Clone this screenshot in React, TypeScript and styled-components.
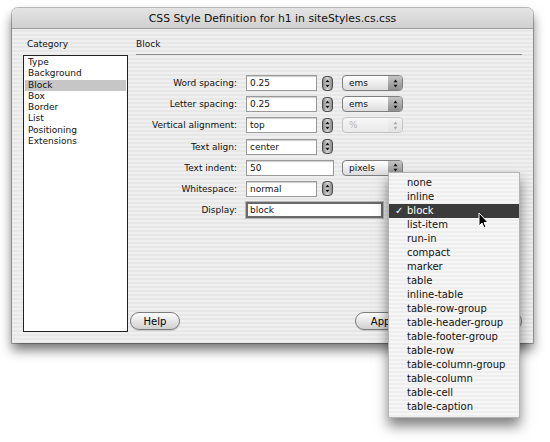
import styled, { createGlobalStyle } from 'styled-components';

const GlobalStyle = createGlobalStyle`
    html, body {
        margin: 0;
        background: #ffffff;
    }
    body {
        font-family: "DejaVu Sans", "Liberation Sans", sans-serif;
        font-size: 9px;
        color: #111;
    }
`;

const rows = [
    { label: 'Word spacing:', value: '0.25', kind: 'combo', unit: 'ems' },
    { label: 'Letter spacing:', value: '0.25', kind: 'combo', unit: 'ems' },
    { label: 'Vertical alignment:', value: 'top', kind: 'combo', unit: '%', disabled: true },
    { label: 'Text align:', value: 'center', kind: 'combo' },
    { label: 'Text indent:', value: '50', kind: 'wide', unit: 'pixels' },
    { label: 'Whitespace:', value: 'normal', kind: 'combo' },
    { label: 'Display:', value: 'block', kind: 'focus' },
];

const categories = ['Type', 'Background', 'Block', 'Box', 'Border', 'List', 'Positioning', 'Extensions'];

const displayOptions = [
    'none', 'inline', 'block', 'list-item', 'run-in', 'compact', 'marker', 'table',
    'inline-table', 'table-row-group', 'table-header-group', 'table-footer-group',
    'table-row', 'table-column-group', 'table-column', 'table-cell', 'table-caption',
];

const Arrows = ({ color = '#111' }: { color?: string }) => (
    <svg width="5" height="9" viewBox="0 0 5 9">
        <path d="M2.5 0.5 L4.5 3.3 L0.5 3.3 Z" fill={color} />
        <path d="M2.5 8.5 L4.5 5.7 L0.5 5.7 Z" fill={color} />
    </svg>
);

const Cursor = () => (
    <svg width="11" height="17" viewBox="0 0 11 17">
        <path d="M1 1 L1 14 L4 11 L6 16 L8 15 L6 10.5 L10 10.5 Z" fill="#000" stroke="#fff" strokeWidth="1" />
    </svg>
);

const App = () => {
    return (
        <>
            <GlobalStyle />
            <Page>
                <Window>
                    <TitleBar>CSS Style Definition for h1 in siteStyles.cs.css</TitleBar>
                    <Body>
                        <Sidebar>
                            <SectionLabel>Category</SectionLabel>
                            <CategoryList>
                                {categories.map((c) => (
                                    <CategoryItem key={c} $active={c === 'Block'}>
                                        {c}
                                    </CategoryItem>
                                ))}
                            </CategoryList>
                        </Sidebar>
                        <Main>
                            <PanelHeader>Block</PanelHeader>
                            <Form>
                                {rows.map((r) => (
                                    <Row key={r.label}>
                                        <Label>{r.label}</Label>
                                        <Controls>
                                            <TextInput $width={r.kind === 'wide' ? 88 : r.kind === 'focus' ? 137 : 71} $focus={r.kind === 'focus'}>
                                                {r.value}
                                            </TextInput>
                                            {r.kind === 'combo' && (
                                                <Stepper>
                                                    <Arrows />
                                                </Stepper>
                                            )}
                                            {r.unit && (
                                                <Popup $disabled={r.disabled} $gap={r.kind === 'wide' ? 8 : 9}>
                                                    <PopupText>{r.unit}</PopupText>
                                                    <PopupArrows $disabled={r.disabled}>
                                                        <Arrows color={r.disabled ? '#aaa' : '#111'} />
                                                    </PopupArrows>
                                                </Popup>
                                            )}
                                        </Controls>
                                    </Row>
                                ))}
                            </Form>
                            <Footer>
                                <PillButton $width={50}>Help</PillButton>
                                <Spacer />
                                <PillButton $width={54}>Appl</PillButton>
                                {/* buttons hidden behind the open menu */}
                                <PillButton $width={58} />
                                <PillButton $width={43} />
                            </Footer>
                        </Main>
                    </Body>
                </Window>
                <Menu>
                    {displayOptions.map((o) => (
                        <MenuItem key={o} $selected={o === 'block'}>
                            {o === 'block' && <Check>✓</Check>}
                            {o}
                        </MenuItem>
                    ))}
                </Menu>
                <CursorWrap>
                    <Cursor />
                </CursorWrap>
            </Page>
        </>
    );
};

const Page = styled.div`
    position: relative;
    width: 550px;
    height: 442px;
    padding: 8px 0 0 12px;
    box-sizing: border-box;
    overflow: hidden;
`;

const Window = styled.div`
    width: 521px;
    height: 335px;
    display: flex;
    flex-direction: column;
    border-radius: 6px 6px 0 0;
    background: repeating-linear-gradient(#efefef 0 2px, #e7e7e7 2px 4px);
    box-shadow:
        0 0 0 1px rgba(0, 0, 0, 0.25),
        0 7px 12px rgba(0, 0, 0, 0.55);
`;

const TitleBar = styled.div`
    height: 20px;
    flex: none;
    display: flex;
    align-items: center;
    justify-content: center;
    border-radius: 6px 6px 0 0;
    background: linear-gradient(#e4e4e4, #d0d0d0);
    border-bottom: 1px solid #9c9c9c;
    font-size: 10.8px;
    color: #111;
`;

const Body = styled.div`
    flex: 1;
    display: grid;
    grid-template-columns: 105px 386px;
    column-gap: 8px;
    padding: 0 11px 11px 11px;
    min-height: 0;
`;

const Sidebar = styled.div`
    display: flex;
    flex-direction: column;
`;

const SectionLabel = styled.div`
    height: 26px;
    padding: 9px 0 0 4px;
    box-sizing: border-box;
    line-height: 12px;
`;

const CategoryList = styled.div`
    flex: 1;
    background: #fff;
    border: 1px solid #222;
    padding: 1px 1px;
    display: flex;
    flex-direction: column;
`;

const CategoryItem = styled.div<{ $active?: boolean }>`
    height: 11.3px;
    line-height: 11.3px;
    padding-left: 3px;
    background: ${(p) => (p.$active ? '#c6c6c6' : 'transparent')};
`;

const Main = styled.div`
    display: flex;
    flex-direction: column;
`;

const PanelHeader = styled.div`
    height: 26px;
    padding-top: 9px;
    box-sizing: border-box;
    line-height: 12px;
    border-bottom: 1px solid #8e8e8e;
`;

const Form = styled.div`
    display: flex;
    flex-direction: column;
    gap: 5.2px;
    padding-top: 20px;
`;

const Row = styled.div`
    display: grid;
    grid-template-columns: 101px 1fr;
    column-gap: 9px;
    align-items: center;
    height: 16px;
`;

const Label = styled.div`
    text-align: right;
    white-space: nowrap;
`;

const Controls = styled.div`
    display: flex;
    align-items: center;
`;

const TextInput = styled.div<{ $width: number; $focus?: boolean }>`
    width: ${(p) => p.$width}px;
    height: 16px;
    box-sizing: border-box;
    background: #fff;
    border: ${(p) => (p.$focus ? '2px solid #6a6a6a' : '1px solid #9a9a9a')};
    box-shadow: ${(p) => (p.$focus ? '0 0 0 1px #b5b5b5' : 'inset 0 1px 1px rgba(0,0,0,0.2)')};
    padding-left: ${(p) => (p.$focus ? 2 : 3)}px;
    line-height: ${(p) => (p.$focus ? 12 : 14)}px;
`;

const Stepper = styled.div`
    width: 11px;
    height: 15px;
    margin-left: 5px;
    box-sizing: border-box;
    border: 1px solid #4e4e4e;
    border-radius: 4px;
    background: linear-gradient(90deg, #8a8a8a, #d6d6d6 50%, #8a8a8a);
    display: flex;
    align-items: center;
    justify-content: center;
`;

const Popup = styled.div<{ $disabled?: boolean; $gap: number }>`
    width: 61px;
    height: 16px;
    margin-left: ${(p) => p.$gap}px;
    box-sizing: border-box;
    display: flex;
    border: 1px solid ${(p) => (p.$disabled ? '#c4c4c4' : '#7e7e7e')};
    border-radius: 4px;
    overflow: hidden;
    background: ${(p) => (p.$disabled ? 'linear-gradient(#f7f7f7, #e9e9e9)' : 'linear-gradient(#ffffff, #dcdcdc)')};
    color: ${(p) => (p.$disabled ? '#b4b4b4' : '#111')};
`;

const PopupText = styled.div`
    flex: 1;
    padding-left: 6px;
    line-height: 14px;
`;

const PopupArrows = styled.div<{ $disabled?: boolean }>`
    width: 14px;
    display: flex;
    align-items: center;
    justify-content: center;
    background: ${(p) => (p.$disabled ? 'linear-gradient(#f2f2f2, #e2e2e2)' : 'linear-gradient(#c4c4c4, #8e8e8e)')};
`;

const Footer = styled.div`
    margin-top: auto;
    margin-left: -6px;
    padding-bottom: 2px;
    display: flex;
    gap: 6px;
`;

const Spacer = styled.div`
    flex: 1;
`;

const PillButton = styled.div<{ $width: number }>`
    width: ${(p) => p.$width}px;
    height: 18px;
    box-sizing: border-box;
    border: 1px solid #7c7c7c;
    border-radius: 9px;
    background: linear-gradient(#fdfdfd, #e4e4e4 55%, #cfcfcf);
    box-shadow: 0 1px 1px rgba(0, 0, 0, 0.15);
    display: flex;
    align-items: center;
    justify-content: center;
    font-size: 10px;
    color: #000;
`;

const Menu = styled.div`
    position: absolute;
    left: 388px;
    top: 172px;
    width: 132px;
    padding: 3px 0;
    box-sizing: border-box;
    background: repeating-linear-gradient(#f6f6f6 0 2px, #eeeeee 2px 4px);
    border: 1px solid #b4b4b4;
    box-shadow: 0 8px 12px rgba(0, 0, 0, 0.5);
    font-size: 10px;
`;

const MenuItem = styled.div<{ $selected?: boolean }>`
    position: relative;
    height: 14px;
    line-height: 14px;
    padding-left: 18px;
    white-space: nowrap;
    background: ${(p) => (p.$selected ? '#3b3b3b' : 'transparent')};
    color: ${(p) => (p.$selected ? '#fff' : '#111')};
`;

const Check = styled.span`
    position: absolute;
    left: 6px;
    top: 0;
`;

const CursorWrap = styled.div`
    position: absolute;
    left: 478px;
    top: 212px;
    line-height: 0;
`;

export default App;
